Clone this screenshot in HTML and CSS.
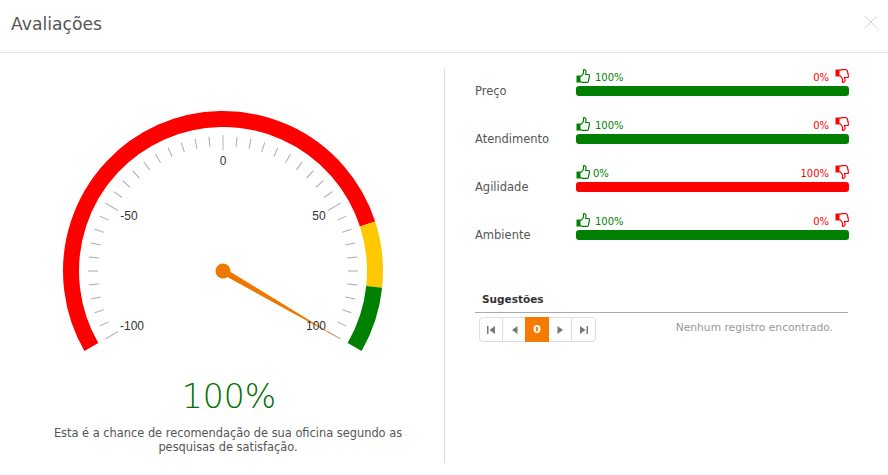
FILE: index.html
```html
<!DOCTYPE html>
<html lang="pt-BR">
<head>
    <meta charset="UTF-8">
    <meta name="viewport" content="width=device-width, initial-scale=1.0">
    <title>Avaliações</title>
    <link rel="stylesheet" href="styles.css">
</head>
<body>

    <svg class="icon-defs" width="0" height="0">
        <symbol id="thumb-up" viewBox="0 0 14 14">
            <rect x="0.5" y="6.5" width="4" height="7" fill="currentColor"/>
            <path d="M4 7.5 L5.5 7 L7.5 4 V0.8 C9 0.3 10.3 1.5 10 3.2 L9.5 5.5 H12.3 C13.4 5.5 13.8 6.5 13.4 7.5 L12.3 12.3 C12.1 13 11.6 13.4 10.8 13.4 H6.5 L4 12.5" fill="none" stroke="currentColor" stroke-width="1.2"/>
        </symbol>
    </svg>

    <div class="header">
        <h1>Avaliações</h1>
        <svg class="close-button" width="14" height="14" viewBox="0 0 14 14">
            <path d="M1 1 L13 13 M13 1 L1 13" stroke="#d4d4d4" stroke-width="1" fill="none"/>
        </svg>
    </div>

    <div class="content">
        <div class="left-col">
            <svg class="gauge" width="444" height="300" viewBox="0 0 444 300">
                <defs>
                    <line id="tick-minor" x1="223" y1="68" x2="223" y2="78" stroke="#aaa" stroke-width="1"/>
                    <line id="tick-major" x1="223" y1="67" x2="223" y2="82" stroke="#b5b5b5" stroke-width="1"/>
                </defs>

                <path d="M91.36 279 A152 152 0 1 1 367.56 156.03" class="band band-red"/>
                <path d="M367.56 156.03 A152 152 0 0 1 374.17 218.89" class="band band-yellow"/>
                <path d="M374.17 218.89 A152 152 0 0 1 354.64 279" class="band band-green"/>

                <use href="#tick-major" transform="rotate(-120 223 203)"/>
                <use href="#tick-minor" transform="rotate(-114 223 203)"/>
                <use href="#tick-minor" transform="rotate(-108 223 203)"/>
                <use href="#tick-minor" transform="rotate(-102 223 203)"/>
                <use href="#tick-minor" transform="rotate(-96 223 203)"/>
                <use href="#tick-minor" transform="rotate(-90 223 203)"/>
                <use href="#tick-minor" transform="rotate(-84 223 203)"/>
                <use href="#tick-minor" transform="rotate(-78 223 203)"/>
                <use href="#tick-minor" transform="rotate(-72 223 203)"/>
                <use href="#tick-minor" transform="rotate(-66 223 203)"/>
                <use href="#tick-major" transform="rotate(-60 223 203)"/>
                <use href="#tick-minor" transform="rotate(-54 223 203)"/>
                <use href="#tick-minor" transform="rotate(-48 223 203)"/>
                <use href="#tick-minor" transform="rotate(-42 223 203)"/>
                <use href="#tick-minor" transform="rotate(-36 223 203)"/>
                <use href="#tick-minor" transform="rotate(-30 223 203)"/>
                <use href="#tick-minor" transform="rotate(-24 223 203)"/>
                <use href="#tick-minor" transform="rotate(-18 223 203)"/>
                <use href="#tick-minor" transform="rotate(-12 223 203)"/>
                <use href="#tick-minor" transform="rotate(-6 223 203)"/>
                <use href="#tick-major"/>
                <use href="#tick-minor" transform="rotate(6 223 203)"/>
                <use href="#tick-minor" transform="rotate(12 223 203)"/>
                <use href="#tick-minor" transform="rotate(18 223 203)"/>
                <use href="#tick-minor" transform="rotate(24 223 203)"/>
                <use href="#tick-minor" transform="rotate(30 223 203)"/>
                <use href="#tick-minor" transform="rotate(36 223 203)"/>
                <use href="#tick-minor" transform="rotate(42 223 203)"/>
                <use href="#tick-minor" transform="rotate(48 223 203)"/>
                <use href="#tick-minor" transform="rotate(54 223 203)"/>
                <use href="#tick-major" transform="rotate(60 223 203)"/>
                <use href="#tick-minor" transform="rotate(66 223 203)"/>
                <use href="#tick-minor" transform="rotate(72 223 203)"/>
                <use href="#tick-minor" transform="rotate(78 223 203)"/>
                <use href="#tick-minor" transform="rotate(84 223 203)"/>
                <use href="#tick-minor" transform="rotate(90 223 203)"/>
                <use href="#tick-minor" transform="rotate(96 223 203)"/>
                <use href="#tick-minor" transform="rotate(102 223 203)"/>
                <use href="#tick-minor" transform="rotate(108 223 203)"/>
                <use href="#tick-minor" transform="rotate(114 223 203)"/>
                <use href="#tick-major" transform="rotate(120 223 203)"/>

                <polygon points="225 200.5 221 205.5 340 271" class="needle"/>
                <circle cx="223" cy="203" r="7.5" class="needle"/>

                <text x="223" y="97" class="gauge-label">0</text>
                <text x="129" y="152" class="gauge-label">-50</text>
                <text x="319" y="152" class="gauge-label">50</text>
                <text x="132" y="262" class="gauge-label">-100</text>
                <text x="316" y="262" class="gauge-label">100</text>
            </svg>
            <div class="score">100%</div>
            <p class="caption">Esta é a chance de recomendação de sua oficina segundo as pesquisas de satisfação.</p>
        </div>

        <div class="right-col">
            <div class="rating">
                <div class="rating-name">Preço</div>
                <div class="rating-data">
                    <div class="rating-top">
                        <span class="likes"><svg class="thumb"><use href="#thumb-up"/></svg>100%</span>
                        <span class="dislikes">0%<svg class="thumb thumb-down"><use href="#thumb-up"/></svg></span>
                    </div>
                    <div class="bar bar-good"></div>
                </div>
            </div>
            <div class="rating">
                <div class="rating-name">Atendimento</div>
                <div class="rating-data">
                    <div class="rating-top">
                        <span class="likes"><svg class="thumb"><use href="#thumb-up"/></svg>100%</span>
                        <span class="dislikes">0%<svg class="thumb thumb-down"><use href="#thumb-up"/></svg></span>
                    </div>
                    <div class="bar bar-good"></div>
                </div>
            </div>
            <div class="rating">
                <div class="rating-name">Agilidade</div>
                <div class="rating-data">
                    <div class="rating-top">
                        <span class="likes likes-tight"><svg class="thumb"><use href="#thumb-up"/></svg>0%</span>
                        <span class="dislikes">100%<svg class="thumb thumb-down"><use href="#thumb-up"/></svg></span>
                    </div>
                    <div class="bar bar-bad"></div>
                </div>
            </div>
            <div class="rating">
                <div class="rating-name">Ambiente</div>
                <div class="rating-data">
                    <div class="rating-top">
                        <span class="likes"><svg class="thumb"><use href="#thumb-up"/></svg>100%</span>
                        <span class="dislikes">0%<svg class="thumb thumb-down"><use href="#thumb-up"/></svg></span>
                    </div>
                    <div class="bar bar-good"></div>
                </div>
            </div>

            <div class="suggestions">
                <div class="suggestions-title">Sugestões</div>
                <div class="pager-row">
                    <div class="pager">
                        <a href="#" class="pager-btn">
                            <svg width="9" height="8" viewBox="0 0 9 8"><path d="M0 0 H1.5 V8 H0 Z M8 0 V8 L2.5 4 Z"/></svg>
                        </a>
                        <a href="#" class="pager-btn">
                            <svg width="7" height="8" viewBox="0 0 7 8"><path d="M6.5 0 V8 L1 4 Z"/></svg>
                        </a>
                        <span class="pager-current">0</span>
                        <a href="#" class="pager-btn">
                            <svg width="7" height="8" viewBox="0 0 7 8"><path d="M0.5 0 V8 L6 4 Z"/></svg>
                        </a>
                        <a href="#" class="pager-btn">
                            <svg width="9" height="8" viewBox="0 0 9 8"><path d="M1 0 V8 L6.5 4 Z M7.5 0 H9 V8 H7.5 Z"/></svg>
                        </a>
                    </div>
                    <div class="pager-info">Nenhum registro encontrado.</div>
                </div>
            </div>
        </div>
    </div>

</body>
</html>
```

FILE: styles.css
```css
body {
    font-family: "DejaVu Sans", Verdana, sans-serif;
    background-color: white;
    color: #555;
    margin: 0;
    overflow: hidden;
}
.icon-defs {
    position: absolute;
}
.header {
    display: flex;
    justify-content: space-between;
    align-items: center;
    height: 52px;
    padding: 0 10px 0 11px;
    border-bottom: 1px solid #e5e5e5;
}
.header h1 {
    font-size: 17.2px;
    font-weight: normal;
    margin: 0 0 4px;
    color: #555;
}
.close-button {
    margin: 0 0 8px;
}
.content {
    display: flex;
    padding-top: 15px;
}
.left-col {
    width: 445px;
    height: 395px;
    box-sizing: border-box;
    border-right: 1px solid #ddd;
}
.gauge {
    display: block;
}
.band {
    fill: none;
    stroke-width: 16;
}
.band-red {
    stroke: #ff0000;
}
.band-yellow {
    stroke: #ffc800;
}
.band-green {
    stroke: #008000;
}
.needle {
    fill: #ee7700;
}
.gauge-label {
    font-family: "Liberation Sans", Arial, sans-serif;
    font-size: 12px;
    fill: #333;
    text-anchor: middle;
}
.score {
    font-size: 33px;
    font-weight: 200;
    line-height: 44px;
    margin-top: 7px;
    color: #006f00;
    text-align: center;
    width: 458px;
}
.caption {
    font-size: 11.4px;
    line-height: 14px;
    margin: 7px auto 0;
    width: 370px;
    text-align: center;
    position: relative;
    left: 6px;
}
.right-col {
    width: 375px;
    margin-left: 30px;
}
.rating {
    display: flex;
    align-items: flex-end;
    height: 48px;
}
.rating-name {
    width: 101px;
    font-size: 11.5px;
    line-height: 14px;
    padding-bottom: 18px;
}
.rating-data {
    width: 273px;
    padding-bottom: 20px;
}
.rating-top {
    display: flex;
    justify-content: space-between;
    align-items: flex-end;
    font-size: 10px;
    line-height: 10px;
    height: 15px;
    margin-bottom: 3px;
}
.likes {
    color: green;
    display: flex;
    align-items: flex-end;
    gap: 5px;
}
.likes-tight {
    gap: 3px;
}
.dislikes {
    color: red;
    display: flex;
    align-items: flex-end;
    gap: 6px;
}
.thumb {
    width: 14px;
    height: 14px;
    flex-shrink: 0;
}
.thumb-down {
    transform: scaleY(-1);
}
.bar {
    height: 10px;
    border-radius: 3px;
}
.bar-good {
    background-color: green;
}
.bar-bad {
    background-color: red;
}
.suggestions {
    width: 373px;
    margin-top: 32px;
}
.suggestions-title {
    font-size: 10.5px;
    font-weight: bold;
    color: #333;
    padding: 0 0 6px 7px;
    line-height: 14px;
    border-bottom: 1px solid #aaa;
}
.pager-row {
    display: flex;
    justify-content: space-between;
    align-items: flex-start;
    padding: 4px 15px 0 4px;
}
.pager {
    display: flex;
    height: 25px;
    box-sizing: border-box;
    border: 1px solid #ddd;
    border-radius: 4px;
}
.pager-btn {
    display: flex;
    align-items: center;
    justify-content: center;
    width: 22px;
    border-right: 1px solid #ddd;
    fill: #777;
}
.pager-btn:last-child {
    width: 23px;
    border-right: none;
}
.pager-current {
    width: 24px;
    margin: -1px 0 -1px -1px;
    background-color: #f77a00;
    color: white;
    font-size: 11px;
    font-weight: bold;
    line-height: 25px;
    text-align: center;
}
.pager-info {
    font-size: 10.7px;
    color: #999;
    line-height: 22px;
}
```
